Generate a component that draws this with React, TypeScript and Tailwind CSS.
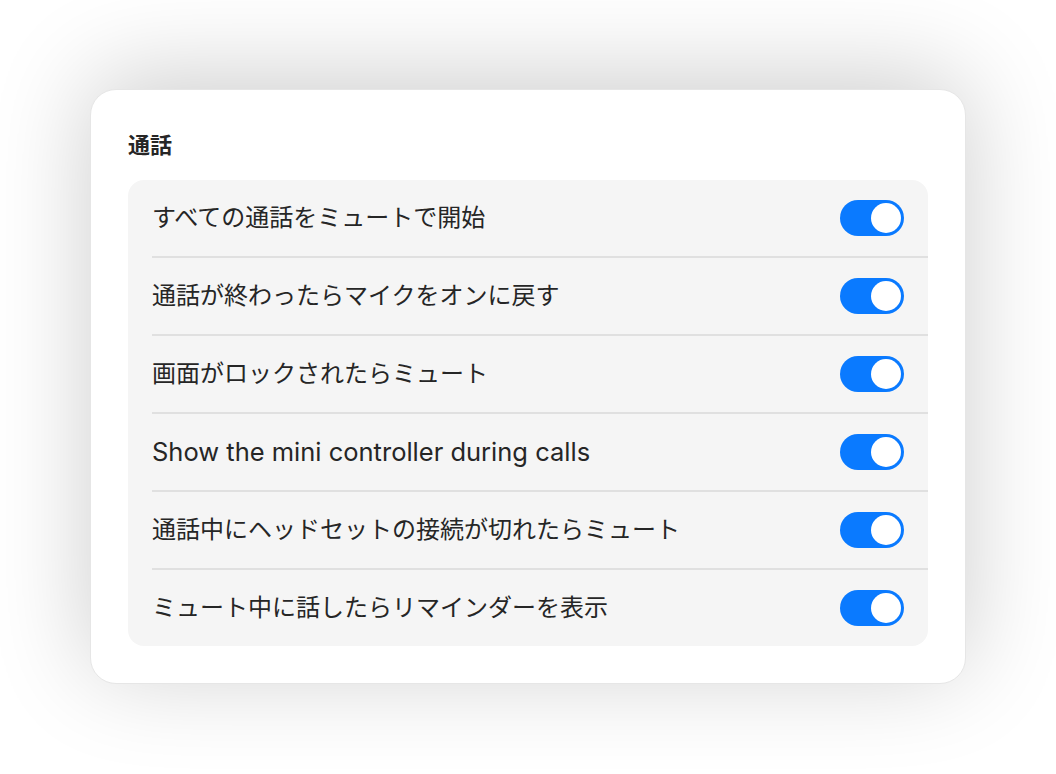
import React, { useState } from "react";

const items: { t: string; latin?: boolean }[] = [
  { t: "すべての通話をミュートで開始" },
  { t: "通話が終わったらマイクをオンに戻す" },
  { t: "画面がロックされたらミュート" },
  { t: "Show the mini controller during calls", latin: true },
  { t: "通話中にヘッドセットの接続が切れたらミュート" },
  { t: "ミュート中に話したらリマインダーを表示" },
];

function Toggle({ on, onClick }: { on: boolean; onClick: () => void }) {
  return (
    <button
      onClick={onClick}
      className={`flex h-[36px] w-[64px] shrink-0 items-center rounded-full p-[3px] ${on ? "justify-end bg-[#0a7aff]" : "justify-start bg-[#d9d9d9]"}`}
    >
      <span className="block h-[30px] w-[30px] rounded-full bg-white" />
    </button>
  );
}

export default function App() {
  const [state, setState] = useState(items.map(() => true));
  return (
    <div
      className="flex h-[774px] w-[1056px] items-start justify-center bg-white pt-[89px]"
      style={{ fontFamily: 'Inter, "Noto Sans CJK JP", sans-serif' }}
    >
      <div className="w-[876px] rounded-[26px] border border-[#e6e6e6] bg-white px-[37px] pb-[37px] pt-[40px] shadow-[0_-12px_100px_rgba(0,0,0,0.2)]">
        <h2 className="mb-[20px] h-[30px] text-[22px] font-semibold leading-[30px] text-[#262626]">通話</h2>
        <div className="rounded-[16px] bg-[#f5f5f5]">
          {items.map((it, i) => (
            <div key={i} className="pl-[24px]">
              <div
                className={`flex items-center justify-between pr-[24px] ${i < items.length - 1 ? "h-[78px] border-b-2 border-[#e0e0e0]" : "h-[76px]"}`}
              >
                <span className={`${it.latin ? "text-[25.5px]" : "text-[24px]"} text-[#262626]`}>{it.t}</span>
                <Toggle on={state[i]} onClick={() => setState(state.map((v, j) => (j === i ? !v : v)))} />
              </div>
            </div>
          ))}
        </div>
      </div>
    </div>
  );
}
